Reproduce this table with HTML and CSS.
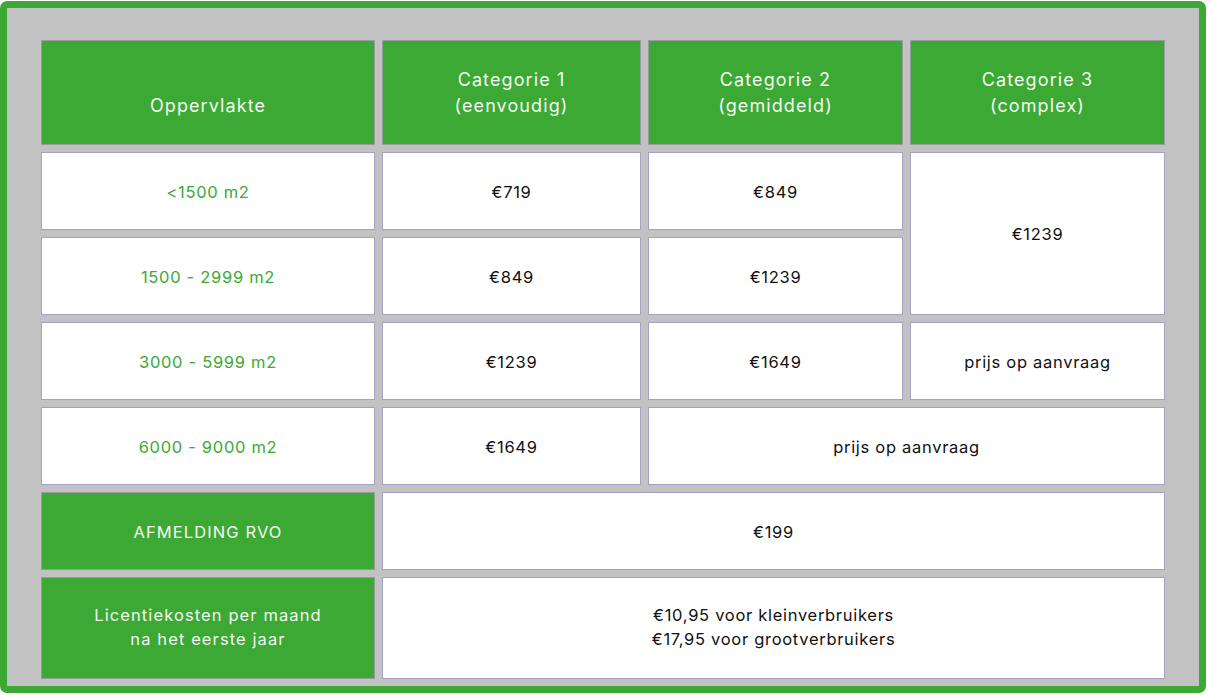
FILE: index.html
```html
<!DOCTYPE html>
<html lang="nl">
<head>
<meta charset="utf-8">
<title>Tarieven</title>
<link rel="stylesheet" href="styles.css">
</head>
<body>
<div class="frame">
  <div class="grid">
    <div class="cell head bottom">Oppervlakte</div>
    <div class="cell head bottom">Categorie 1<br>(eenvoudig)</div>
    <div class="cell head bottom">Categorie 2<br>(gemiddeld)</div>
    <div class="cell head bottom">Categorie 3<br>(complex)</div>

    <div class="cell area">&lt;1500 m2</div>
    <div class="cell">€719</div>
    <div class="cell">€849</div>
    <div class="cell span-r2">€1239</div>

    <div class="cell area">1500 - 2999 m2</div>
    <div class="cell">€849</div>
    <div class="cell">€1239</div>

    <div class="cell area">3000 - 5999 m2</div>
    <div class="cell">€1239</div>
    <div class="cell">€1649</div>
    <div class="cell">prijs op aanvraag</div>

    <div class="cell area">6000 - 9000 m2</div>
    <div class="cell">€1649</div>
    <div class="cell span-c2">prijs op aanvraag</div>

    <div class="cell head">AFMELDING RVO</div>
    <div class="cell span-c3">€199</div>

    <div class="cell head lines">Licentiekosten per maand<br>na het eerste jaar</div>
    <div class="cell span-c3 lines">€10,95 voor kleinverbruikers<br>€17,95 voor grootverbruikers</div>
  </div>
</div>
</body>
</html>
```
FILE: styles.css
```css
html, body {
  margin: 0;
  padding: 0;
  background: #ffffff;
}
body {
  font-family: "Inter", "Liberation Sans", sans-serif;
}
.frame {
  box-sizing: border-box;
  width: 1206px;
  height: 692px;
  margin-top: 1px;
  border: 7px solid #3ca935;
  border-radius: 7px;
  background: #c2c2c2;
  padding: 32px 0 0 34px;
}
.grid {
  display: grid;
  grid-template-columns: 334px 259px 255px 255px;
  grid-template-rows: 105px repeat(5, 78px) 102px;
  gap: 7px;
}
.cell {
  box-sizing: border-box;
  background: #ffffff;
  border: 1px solid #a99fc4;
  display: flex;
  align-items: center;
  justify-content: center;
  text-align: center;
  font-size: 16.5px;
  letter-spacing: 0.7px;
  color: #111111;
  line-height: 24px;
  padding-top: 1px;
}
.head {
  background: #3ca935;
  border-color: #9b9aa3;
  color: #f4f9f2;
  letter-spacing: 1.1px;
}
.head.bottom {
  align-items: flex-end;
  padding-top: 0;
  padding-bottom: 25px;
  font-size: 18px;
  line-height: 26px;
}
.lines {
  padding-top: 0;
  padding-bottom: 2px;
}
.area {
  color: #3ca935;
}
.span-r2 {
  grid-row: span 2;
}
.span-c2 {
  grid-column: span 2;
}
.span-c3 {
  grid-column: span 3;
}
```
